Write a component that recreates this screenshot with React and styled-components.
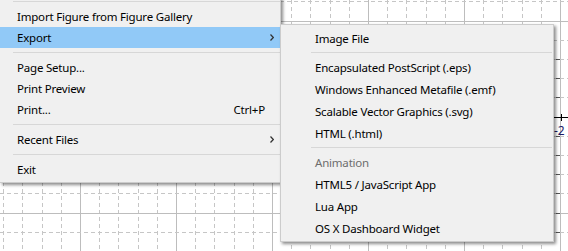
import * as React from "react";
import { createGlobalStyle, styled } from "styled-components";

const GlobalStyle = createGlobalStyle`
  html, body {
    margin: 0;
    padding: 0;
    background: #ffffff;
    overflow: hidden;
  }
`;

const Page = styled.div`
  position: relative;
  width: 568px;
  height: 251px;
  overflow: hidden;
  font-family: "Noto Sans", "Open Sans", sans-serif;
  font-size: 11.5px;
  letter-spacing: -0.2px;
  color: #000000;
`;

const Canvas = styled.svg`
  position: absolute;
  left: 0;
  top: 0;
`;

const Menu = styled.div`
  position: absolute;
  left: ${(props) => props.left}px;
  top: ${(props) => props.top}px;
  width: ${(props) => props.width}px;
  display: flex;
  flex-direction: column;
  box-sizing: border-box;
  background: #f0f0f0;
  border: 1px solid #cccccc;
  border-left-width: ${(props) => (props.cutLeft ? 0 : 1)}px;
  border-top-width: ${(props) => (props.cutTop ? 0 : 1)}px;
  padding: ${(props) => (props.cutTop ? 0 : 2)}px 0 2px 0;
  box-shadow: 2px 2px 3px rgba(0, 0, 0, 0.45);
`;

const Row = styled.div`
  display: flex;
  align-items: center;
  height: ${(props) => props.h}px;
  padding-left: ${(props) => props.indent}px;
  padding-right: 6px;
  background: ${(props) => (props.active ? "#91c9f7" : "transparent")};
  color: ${(props) => (props.disabled ? "#6d6d6d" : "#000000")};
  white-space: nowrap;
`;

const Label = styled.span`
  flex: 1;
`;

const Shortcut = styled.span`
  margin-right: 5px;
`;

const ArrowSlot = styled.span`
  display: flex;
  width: 4px;
  height: 7px;
`;

const Separator = styled.div`
  height: ${(props) => props.h}px;
  display: flex;
  align-items: center;
  padding-left: ${(props) => props.indent}px;
  padding-right: ${(props) => props.endGap}px;

  &::after {
    content: "";
    flex: 1;
    height: 1px;
    background: #d7d7d7;
  }
`;

function Chevron() {
  return (
    <svg width="4" height="7" viewBox="0 0 4 7">
      <polyline points="0.5,0.5 3.3,3.5 0.5,6.5" fill="none" stroke="#333333" strokeWidth="1.2" />
    </svg>
  );
}

function Item({ label, shortcut, submenu, active, disabled, h, indent }) {
  return (
    <Row h={h} indent={indent} active={active} disabled={disabled}>
      <Label>{label}</Label>
      {shortcut && <Shortcut>{shortcut}</Shortcut>}
      <ArrowSlot>{submenu && <Chevron />}</ArrowSlot>
    </Row>
  );
}

const fileMenu = [
  { sep: true },
  { label: "Import Figure from Figure Gallery" },
  { label: "Export", submenu: true, active: true },
  { sep: true },
  { label: "Page Setup..." },
  { label: "Print Preview" },
  { label: "Print...", shortcut: "Ctrl+P" },
  { sep: true },
  { label: "Recent Files", submenu: true },
  { sep: true },
  { label: "Exit" },
];

const exportMenu = [
  { label: "Image File" },
  { sep: true },
  { label: "Encapsulated PostScript (.eps)" },
  { label: "Windows Enhanced Metafile (.emf)" },
  { label: "Scalable Vector Graphics (.svg)" },
  { label: "HTML (.html)" },
  { sep: true },
  { label: "Animation", disabled: true },
  { label: "HTML5 / JavaScript App" },
  { label: "Lua App" },
  { label: "OS X Dashboard Widget" },
];

function GridPaper() {
  const lines = [];
  for (let k = -4; k < 26; k++) {
    const x = Math.round(80 + 19.2 * k);
    if (x < 0 || x > 568) continue;
    const major = k % 5 === 0;
    lines.push(
      <line
        key={"v" + k}
        x1={x + 0.5}
        y1="0"
        x2={x + 0.5}
        y2="251"
        stroke={major ? "#bdbdbd" : "#c6c6c6"}
        strokeDasharray={major ? undefined : "4 3"}
      />
    );
  }
  for (let k = -1; k < 13; k++) {
    const y = Math.floor(21 + 19.2 * k);
    if (y < 0 || y > 251) continue;
    const major = k % 5 === 0;
    lines.push(
      <line
        key={"h" + k}
        x1="0"
        y1={y + 0.5}
        x2="568"
        y2={y + 0.5}
        stroke={major ? "#bdbdbd" : "#c6c6c6"}
        strokeDasharray={major ? undefined : "4 3"}
      />
    );
  }
  const ticks = [];
  for (let k = 2; k < 12; k++) {
    const y = Math.floor(21 + 19.2 * k);
    ticks.push(<line key={"t" + k} x1="556" y1={y + 0.5} x2="560" y2={y + 0.5} stroke="#555555" />);
  }
  return (
    <Canvas width="568" height="251" shapeRendering="crispEdges">
      {lines}
      {ticks}
      <line x1="550" y1="117.5" x2="568" y2="117.5" stroke="#000000" />
      <line x1="561.5" y1="114" x2="561.5" y2="121" stroke="#000000" />
      <text x="554" y="135" fontFamily="Noto Sans, sans-serif" fontSize="12" fill="#1a1a66">
        -2
      </text>
    </Canvas>
  );
}

function MenuList({ entries, h, sepH, indent, sepIndent, endGap }) {
  return entries.map((entry, index) =>
    entry.sep ? (
      <Separator key={index} h={sepH} indent={sepIndent} endGap={endGap} />
    ) : (
      <Item key={index} {...entry} h={h} indent={indent} />
    )
  );
}

export default function App() {
  return (
    <>
      <GlobalStyle />
      <Page>
        <GridPaper />
        <Menu left={0} top={-3} width={281} cutLeft cutTop>
          <MenuList entries={fileMenu} h={21} sepH={9} indent={17} sepIndent={13} endGap={0} />
        </Menu>
        <Menu left={280} top={24} width={274}>
          <MenuList entries={exportMenu} h={22} sepH={7} indent={34} sepIndent={30} endGap={1} />
        </Menu>
      </Page>
    </>
  );
}
